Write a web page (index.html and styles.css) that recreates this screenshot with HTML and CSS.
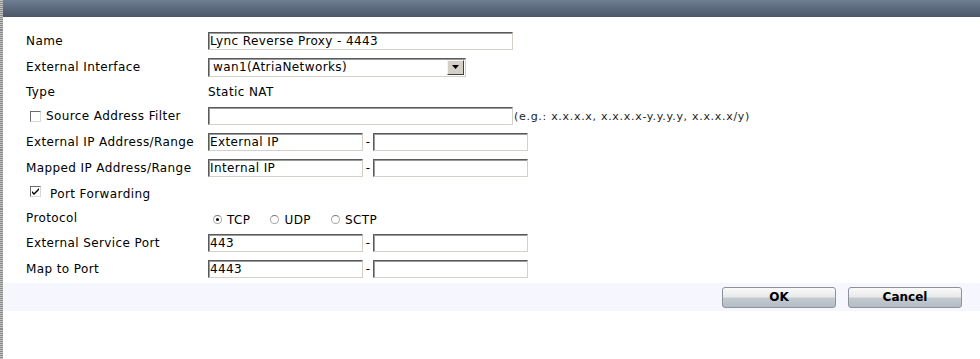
FILE: index.html
```html
<!DOCTYPE html>
<html lang="en">
<head>
  <meta charset="UTF-8" />
  <title>Virtual IP</title>
  <link rel="stylesheet" href="styles.css">
</head>
<body>
  <div class="dialog">
    <div class="titlebar"></div>
    <form class="vip-form">
      <div class="row">
        <label class="label">Name</label>
        <div class="value"><input class="field wide" type="text" value="Lync Reverse Proxy - 4443" /></div>
      </div>
      <div class="row">
        <label class="label">External Interface</label>
        <div class="value">
          <div class="fake-select">
            <span class="fake-select-text">wan1(AtriaNetworks)</span>
            <span class="fake-select-btn">
              <svg width="7" height="4" viewBox="0 0 7 4"><path d="M0 0h7L3.5 4z" fill="#000"/></svg>
            </span>
          </div>
        </div>
      </div>
      <div class="row row-24">
        <label class="label">Type</label>
        <div class="value">Static NAT</div>
      </div>
      <div class="row row-24">
        <label class="label check-label"><span class="check"></span>Source Address Filter</label>
        <div class="value"><input class="field wide" type="text" /><span class="hint">(e.g.: x.x.x.x, x.x.x.x-y.y.y.y, x.x.x.x/y)</span></div>
      </div>
      <div class="row row-27">
        <label class="label">External IP Address/Range</label>
        <div class="value"><input class="field short" type="text" value="External IP" /><span class="dash">-</span><input class="field short" type="text" /></div>
      </div>
      <div class="row">
        <label class="label">Mapped IP Address/Range</label>
        <div class="value"><input class="field short" type="text" value="Internal IP" /><span class="dash">-</span><input class="field short" type="text" /></div>
      </div>
      <div class="row row-25">
        <label class="label check-label pf"><span class="check checked">
          <svg width="7" height="7" viewBox="0 0 7 7"><path d="M0 3l2 2 5-5v2L2 7 0 5z" fill="#000"/></svg>
        </span>Port Forwarding</label>
      </div>
      <div class="row row-24">
        <label class="label">Protocol</label>
        <div class="value radios">
          <span class="radio on"></span><span class="radio-text">TCP</span>
          <span class="radio"></span><span class="radio-text">UDP</span>
          <span class="radio"></span><span class="radio-text">SCTP</span>
        </div>
      </div>
      <div class="row">
        <label class="label">External Service Port</label>
        <div class="value"><input class="field short" type="text" value="443" /><span class="dash">-</span><input class="field short" type="text" /></div>
      </div>
      <div class="row">
        <label class="label">Map to Port</label>
        <div class="value"><input class="field short" type="text" value="4443" /><span class="dash">-</span><input class="field short" type="text" /></div>
      </div>
    </form>
    <div class="button-bar">
      <button class="btn" type="button">OK</button>
      <button class="btn" type="button">Cancel</button>
    </div>
  </div>
</body>
</html>
```
FILE: styles.css
```css
body {
  margin: 0;
  padding: 0;
  background-color: #fff;
  font-family: 'DejaVu Sans', Verdana, sans-serif;
  font-size: 12px;
  letter-spacing: 0.4px;
  color: #000;
}
.dialog {
  height: 359px;
  border-left: 3px solid transparent;
  border-image: repeating-linear-gradient(to bottom, #8a8a8a 0 1px, #c4c4c4 1px 2px) 3;
}
.titlebar {
  height: 17px;
  background: linear-gradient(to bottom, #6f7e93, #4a5568);
}
.vip-form {
  padding: 11px 0 0 23px;
}
.row {
  display: flex;
  align-items: center;
  height: 26px;
}
.row-24 { height: 24px; }
.row-25 { height: 25px; }
.row-27 { height: 27px; }
.label {
  width: 182px;
  flex-shrink: 0;
}
.value {
  display: flex;
  align-items: center;
}
.field {
  box-sizing: border-box;
  height: 18px;
  margin: 0;
  padding: 0 0 0 1px;
  font-family: inherit;
  font-size: 12px;
  letter-spacing: 0.4px;
  color: #000;
  background: #fff;
  border: 1px solid;
  border-color: #5a5a5a #d4d0c8 #d4d0c8 #5a5a5a;
  box-shadow: inset 1px 1px 0 #9a9a9a;
  outline: none;
}
.wide { width: 305px; }
.short { width: 155px; }
.dash {
  width: 10px;
  text-align: center;
}
.hint {
  font-size: 11px;
  letter-spacing: 0.7px;
  color: #222;
  margin-left: 1px;
}
.fake-select {
  box-sizing: border-box;
  width: 258px;
  height: 19px;
  display: flex;
  align-items: center;
  border: 1px solid;
  border-color: #5a5a5a #d4d0c8 #d4d0c8 #5a5a5a;
  box-shadow: inset 1px 1px 0 #9a9a9a;
  background: #fff;
}
.fake-select-text {
  flex: 1;
  padding-left: 4px;
}
.fake-select-btn {
  box-sizing: border-box;
  width: 17px;
  height: 15px;
  margin-right: 1px;
  display: flex;
  align-items: center;
  justify-content: center;
  background: #d4d0c8;
  border: 1px solid;
  border-color: #f4f4f4 #404040 #404040 #f4f4f4;
}
.check-label {
  display: flex;
  align-items: center;
  margin-left: 4px;
  width: 178px;
}
.check {
  box-sizing: border-box;
  width: 11px;
  height: 11px;
  margin-right: 5px;
  display: inline-flex;
  align-items: center;
  justify-content: center;
  border: 1px solid;
  border-color: #6a6a6a #d8d8d8 #d8d8d8 #6a6a6a;
  background: #fff;
}
.pf .check {
  margin-right: 9px;
  margin-top: -5px;
}
.radios {
  padding-left: 5px;
  padding-top: 3px;
}
.radio {
  box-sizing: border-box;
  width: 9px;
  height: 9px;
  border-radius: 50%;
  border: 1px solid #a9a9a9;
  border-top-color: #777;
  background: #fff;
  position: relative;
}
.radio.on::after {
  content: "";
  position: absolute;
  left: 2px;
  top: 2px;
  width: 3px;
  height: 3px;
  border-radius: 50%;
  background: #000;
}
.radio-text {
  margin-left: 5px;
  margin-right: 20px;
}
.button-bar {
  margin-top: 1px;
  height: 28px;
  background-color: #f5f6fe;
  display: flex;
  align-items: center;
  justify-content: flex-end;
  gap: 12px;
  padding-right: 18px;
}
.btn {
  width: 114px;
  height: 21px;
  padding: 0;
  font-family: inherit;
  font-size: 12px;
  font-weight: bold;
  letter-spacing: 0;
  color: #000;
  border: 1px solid #8c9298;
  border-radius: 3px;
  background: linear-gradient(to bottom, #fafafa 0, #e9e9ea 45%, #c3cad0 55%, #b4bcc4 100%);
  cursor: pointer;
}
```
